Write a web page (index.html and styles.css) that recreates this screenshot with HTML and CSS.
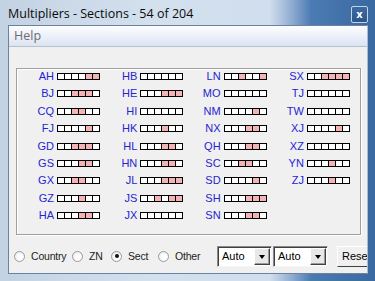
FILE: index.html
```html
<!DOCTYPE html>
<html lang="en">
<head>
  <meta charset="UTF-8">
  <title>Multipliers - Sections - 54 of 204</title>
  <link rel="stylesheet" href="styles.css">
</head>
<body>
  <div class="window">
    <div class="titlebar">
      <span class="title">Multipliers - Sections - 54 of 204</span>
      <button class="close-btn">x</button>
    </div>

    <div class="client">
      <div class="menubar"><span class="menu-item">Help</span></div>

      <div class="content">
        <div class="mult-panel">
          <div class="mult-grid">
            <!-- column 1 -->
            <div class="mult"><span class="name">AH</span><span class="bands"><span class="band"></span><span class="band"></span><span class="band"></span><span class="band"></span><span class="band on"></span><span class="band on"></span></span></div>
            <div class="mult"><span class="name">BJ</span><span class="bands"><span class="band"></span><span class="band"></span><span class="band on"></span><span class="band on"></span><span class="band on"></span><span class="band"></span></span></div>
            <div class="mult"><span class="name">CQ</span><span class="bands"><span class="band"></span><span class="band"></span><span class="band on"></span><span class="band on"></span><span class="band"></span><span class="band"></span></span></div>
            <div class="mult"><span class="name">FJ</span><span class="bands"><span class="band"></span><span class="band"></span><span class="band"></span><span class="band"></span><span class="band on"></span><span class="band"></span></span></div>
            <div class="mult"><span class="name">GD</span><span class="bands"><span class="band"></span><span class="band"></span><span class="band on"></span><span class="band on"></span><span class="band on"></span><span class="band"></span></span></div>
            <div class="mult"><span class="name">GS</span><span class="bands"><span class="band"></span><span class="band"></span><span class="band"></span><span class="band on"></span><span class="band on"></span><span class="band"></span></span></div>
            <div class="mult"><span class="name">GX</span><span class="bands"><span class="band"></span><span class="band"></span><span class="band on"></span><span class="band on"></span><span class="band"></span><span class="band"></span></span></div>
            <div class="mult"><span class="name">GZ</span><span class="bands"><span class="band"></span><span class="band"></span><span class="band"></span><span class="band on"></span><span class="band"></span><span class="band"></span></span></div>
            <div class="mult"><span class="name">HA</span><span class="bands"><span class="band"></span><span class="band"></span><span class="band"></span><span class="band on"></span><span class="band on"></span><span class="band"></span></span></div>
            <!-- column 2 -->
            <div class="mult"><span class="name">HB</span><span class="bands"><span class="band"></span><span class="band"></span><span class="band"></span><span class="band"></span><span class="band"></span><span class="band"></span></span></div>
            <div class="mult"><span class="name">HE</span><span class="bands"><span class="band"></span><span class="band"></span><span class="band"></span><span class="band on"></span><span class="band on"></span><span class="band on"></span></span></div>
            <div class="mult"><span class="name">HI</span><span class="bands"><span class="band"></span><span class="band"></span><span class="band"></span><span class="band"></span><span class="band"></span><span class="band"></span></span></div>
            <div class="mult"><span class="name">HK</span><span class="bands"><span class="band"></span><span class="band"></span><span class="band"></span><span class="band on"></span><span class="band"></span><span class="band"></span></span></div>
            <div class="mult"><span class="name">HL</span><span class="bands"><span class="band"></span><span class="band"></span><span class="band"></span><span class="band on"></span><span class="band on"></span><span class="band"></span></span></div>
            <div class="mult"><span class="name">HN</span><span class="bands"><span class="band"></span><span class="band"></span><span class="band"></span><span class="band on"></span><span class="band on"></span><span class="band"></span></span></div>
            <div class="mult"><span class="name">JL</span><span class="bands"><span class="band"></span><span class="band"></span><span class="band"></span><span class="band on"></span><span class="band on"></span><span class="band on"></span></span></div>
            <div class="mult"><span class="name">JS</span><span class="bands"><span class="band"></span><span class="band"></span><span class="band on"></span><span class="band"></span><span class="band on"></span><span class="band on"></span></span></div>
            <div class="mult"><span class="name">JX</span><span class="bands"><span class="band"></span><span class="band"></span><span class="band"></span><span class="band"></span><span class="band"></span><span class="band"></span></span></div>
            <!-- column 3 -->
            <div class="mult"><span class="name">LN</span><span class="bands"><span class="band"></span><span class="band"></span><span class="band on"></span><span class="band"></span><span class="band"></span><span class="band on"></span></span></div>
            <div class="mult"><span class="name">MO</span><span class="bands"><span class="band"></span><span class="band"></span><span class="band"></span><span class="band"></span><span class="band"></span><span class="band"></span></span></div>
            <div class="mult"><span class="name">NM</span><span class="bands"><span class="band"></span><span class="band"></span><span class="band"></span><span class="band"></span><span class="band on"></span><span class="band"></span></span></div>
            <div class="mult"><span class="name">NX</span><span class="bands"><span class="band"></span><span class="band"></span><span class="band"></span><span class="band on"></span><span class="band on"></span><span class="band"></span></span></div>
            <div class="mult"><span class="name">QH</span><span class="bands"><span class="band"></span><span class="band"></span><span class="band"></span><span class="band on"></span><span class="band on"></span><span class="band"></span></span></div>
            <div class="mult"><span class="name">SC</span><span class="bands"><span class="band"></span><span class="band"></span><span class="band on"></span><span class="band on"></span><span class="band"></span><span class="band"></span></span></div>
            <div class="mult"><span class="name">SD</span><span class="bands"><span class="band"></span><span class="band"></span><span class="band"></span><span class="band"></span><span class="band on"></span><span class="band"></span></span></div>
            <div class="mult"><span class="name">SH</span><span class="bands"><span class="band"></span><span class="band"></span><span class="band"></span><span class="band on"></span><span class="band on"></span><span class="band on"></span></span></div>
            <div class="mult"><span class="name">SN</span><span class="bands"><span class="band"></span><span class="band"></span><span class="band"></span><span class="band on"></span><span class="band on"></span><span class="band"></span></span></div>
            <!-- column 4 -->
            <div class="mult"><span class="name">SX</span><span class="bands"><span class="band"></span><span class="band"></span><span class="band on"></span><span class="band on"></span><span class="band on"></span><span class="band on"></span></span></div>
            <div class="mult"><span class="name">TJ</span><span class="bands"><span class="band"></span><span class="band"></span><span class="band"></span><span class="band"></span><span class="band"></span><span class="band"></span></span></div>
            <div class="mult"><span class="name">TW</span><span class="bands"><span class="band"></span><span class="band"></span><span class="band"></span><span class="band"></span><span class="band"></span><span class="band"></span></span></div>
            <div class="mult"><span class="name">XJ</span><span class="bands"><span class="band"></span><span class="band"></span><span class="band"></span><span class="band"></span><span class="band on"></span><span class="band"></span></span></div>
            <div class="mult"><span class="name">XZ</span><span class="bands"><span class="band"></span><span class="band"></span><span class="band"></span><span class="band"></span><span class="band"></span><span class="band"></span></span></div>
            <div class="mult"><span class="name">YN</span><span class="bands"><span class="band"></span><span class="band"></span><span class="band"></span><span class="band on"></span><span class="band"></span><span class="band"></span></span></div>
            <div class="mult"><span class="name">ZJ</span><span class="bands"><span class="band"></span><span class="band"></span><span class="band"></span><span class="band on"></span><span class="band"></span><span class="band"></span></span></div>
          </div>
        </div>

        <div class="controls">
          <div class="radio-group">
            <label class="radio radio-country"><span class="radio-dot"></span>Country</label>
            <label class="radio radio-zn"><span class="radio-dot"></span>ZN</label>
            <label class="radio radio-sect"><span class="radio-dot checked"></span>Sect</label>
            <label class="radio"><span class="radio-dot"></span>Other</label>
          </div>
          <div class="combo"><span class="combo-text">Auto</span><span class="combo-btn"></span></div>
          <div class="combo"><span class="combo-text">Auto</span><span class="combo-btn"></span></div>
          <button class="reset-btn">Reset</button>
        </div>
      </div>
    </div>
  </div>
</body>
</html>
```

FILE: styles.css
```css
* {
  box-sizing: border-box;
  margin: 0;
  padding: 0;
}

body {
  width: 375px;
  height: 281px;
  overflow: hidden;
  background: #3c6aa3;
  font-family: "Liberation Sans", Arial, sans-serif;
}

/* window frame (aero glass) */
.window {
  width: 375px;
  height: 281px;
  padding: 0 7px 7px 8px;
  display: flex;
  flex-direction: column;
  background: linear-gradient(90deg, #c3d2e3 0%, #d3e0ee 40%, #d0deed 72%, #8eaad0 78%, #4b7bb3 83%, #3a68a1 100%);
}

.titlebar {
  height: 25px;
  display: flex;
  justify-content: space-between;
  align-items: flex-start;
}

.title {
  font-family: "Open Sans", "Noto Sans", sans-serif;
  font-size: 12.5px;
  line-height: 17px;
  margin-top: 5px;
  color: #0c0c0c;
}

.close-btn {
  width: 17px;
  height: 17px;
  margin-top: 6px;
  border: 1px solid #c4d4e8;
  border-radius: 2px;
  background: linear-gradient(#3c6aa2, #2a568c);
  color: #fff;
  font-family: "DejaVu Sans", sans-serif;
  font-size: 10px;
  font-weight: bold;
  line-height: 13px;
  text-align: center;
}

.client {
  flex: 1;
  display: flex;
  flex-direction: column;
  border: 1px solid #6b819c;
  border-right-color: #a9bdd6;
  background: #f0f0f0;
  overflow: hidden;
}

.menubar {
  height: 21px;
  padding-left: 5px;
  background: linear-gradient(#fcfdff, #e9eef8 60%, #dbe3f2);
  border-bottom: 1px solid #b8bfcd;
}

.menu-item {
  font-family: "Open Sans", "Noto Sans", sans-serif;
  font-size: 12.5px;
  line-height: 20px;
  color: #6d6d6d;
}

.content {
  flex: 1;
  padding: 21px 0 0 7px;
}

/* multiplier grid */
.mult-panel {
  width: 345px;
  height: 167px;
  border: 1px solid #a0a0a0;
  box-shadow: inset 1px 1px 0 #fff, 1px 1px 0 #fff;
}

.mult-grid {
  display: grid;
  grid-template-columns: repeat(4, 83.3px);
  grid-template-rows: repeat(9, 12px);
  grid-auto-flow: column;
  row-gap: 5.4px;
  padding-top: 1px;
}

.mult {
  display: flex;
  align-items: center;
  height: 12px;
}

.name {
  width: 40px;
  padding-right: 3px;
  text-align: right;
  font-size: 11px;
  line-height: 12px;
  color: #2424d2;
}

.bands {
  display: flex;
  margin-top: 1px;
  border-left: 1px solid #000;
}

.band {
  width: 7px;
  height: 7px;
  border: 1px solid #000;
  border-left: none;
  background: #fff;
}

.band.on {
  background: #f4b3b4;
}

/* bottom controls */
.controls {
  display: flex;
  align-items: center;
  margin-top: 10px;
  margin-left: -2px;
  height: 22px;
}

.controls > * {
  flex-shrink: 0;
}

.radio-group {
  width: 203px;
  display: flex;
  align-items: center;
}

.radio {
  display: flex;
  align-items: center;
  gap: 6px;
  font-size: 10.5px;
  letter-spacing: -0.2px;
  color: #222;
}

.radio-country { width: 58px; }
.radio-zn { width: 39px; }
.radio-sect { width: 47px; }

.radio-dot {
  width: 11px;
  height: 11px;
  border-radius: 50%;
  border: 1px solid #9a9a9a;
  background: radial-gradient(circle at 60% 60%, #fff 30%, #e2e2e2 100%);
  position: relative;
}

.radio-dot.checked::after {
  content: "";
  position: absolute;
  left: 2.5px;
  top: 2.5px;
  width: 4px;
  height: 4px;
  border-radius: 50%;
  background: #111;
}

.combo {
  width: 55px;
  height: 21px;
  margin-right: 1px;
  display: flex;
  align-items: center;
  justify-content: space-between;
  padding: 1px;
  background: #fff;
  border: 1px solid;
  border-color: #8a8a8a #f4f4f4 #f4f4f4 #8a8a8a;
  box-shadow: inset 1px 1px 0 #404040;
}

.combo-text {
  padding-left: 3px;
  font-size: 11px;
  color: #000;
}

.combo-btn {
  width: 16px;
  height: 17px;
  margin-top: 1px;
  background: #e8e8e8;
  border: 1px solid;
  border-color: #fff #404040 #404040 #fff;
  box-shadow: inset -1px -1px 0 #9a9a9a;
  position: relative;
}

.combo-btn::after {
  content: "";
  position: absolute;
  left: 4px;
  top: 6px;
  border-left: 3.5px solid transparent;
  border-right: 3.5px solid transparent;
  border-top: 4px solid #000;
}

.reset-btn {
  width: 48px;
  height: 21px;
  margin-left: 8px;
  padding-left: 4px;
  text-align: left;
  background: #f0f0f0;
  border: 1px solid;
  border-color: #fff #404040 #404040 #fff;
  font-family: "Liberation Sans", Arial, sans-serif;
  font-size: 11px;
  color: #000;
}
```
